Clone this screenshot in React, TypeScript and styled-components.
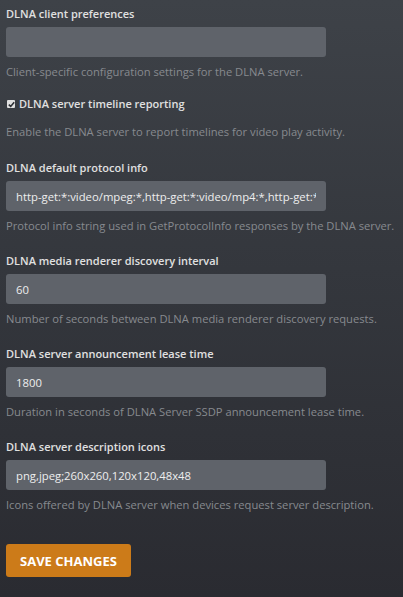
import * as React from 'react';
import styled, { createGlobalStyle } from 'styled-components';

interface Setting {
  label: string;
  value?: string;
  help: string;
  checkbox?: boolean;
  checked?: boolean;
}

const settings: Setting[] = [
  { label: 'DLNA client preferences', value: '', help: 'Client-specific configuration settings for the DLNA server.' },
  { label: 'DLNA server timeline reporting', checkbox: true, checked: true, help: 'Enable the DLNA server to report timelines for video play activity.' },
  { label: 'DLNA default protocol info', value: 'http-get:*:video/mpeg:*,http-get:*:video/mp4:*,http-get:*:video/vnd.dlna.mpeg-tts:*', help: 'Protocol info string used in GetProtocolInfo responses by the DLNA server.' },
  { label: 'DLNA media renderer discovery interval', value: '60', help: 'Number of seconds between DLNA media renderer discovery requests.' },
  { label: 'DLNA server announcement lease time', value: '1800', help: 'Duration in seconds of DLNA Server SSDP announcement lease time.' },
  { label: 'DLNA server description icons', value: 'png,jpeg;260x260,120x120,48x48', help: 'Icons offered by DLNA server when devices request server description.' },
];

const App: React.FC = () => {
  const [values, setValues] = React.useState<Setting[]>(settings);

  const update = (index: number, patch: Partial<Setting>) => {
    setValues(values.map((s, i) => (i === index ? { ...s, ...patch } : s)));
  };

  return (
    <>
      <GlobalStyle />
      <Page>
        {values.map((setting, index) =>
          setting.checkbox ? (
            <CheckGroup key={setting.label}>
              <CheckLabel>
                <Box checked={!!setting.checked} onClick={() => update(index, { checked: !setting.checked })}>
                  {setting.checked && (
                    <svg width="7" height="7" viewBox="0 0 7 7">
                      <path d="M0.8 3.6 L2.7 5.4 L6.2 1.2" fill="none" stroke="#2e3136" strokeWidth="1.6" />
                    </svg>
                  )}
                </Box>
                {setting.label}
              </CheckLabel>
              <Help tight>{setting.help}</Help>
            </CheckGroup>
          ) : (
            <Group key={setting.label}>
              <Label>{setting.label}</Label>
              <Input value={setting.value} onChange={e => update(index, { value: e.target.value })} />
              <Help>{setting.help}</Help>
            </Group>
          )
        )}
        <SaveButton>Save Changes</SaveButton>
      </Page>
    </>
  );
};

export default App;

const GlobalStyle = createGlobalStyle`
  html, body {
    margin: 0;
    padding: 0;
    background: #2a2c31;
  }

  body {
    font-family: "Open Sans", "Noto Sans", sans-serif;
  }
`;

const Page = styled.div`
  min-height: 597px;
  box-sizing: border-box;
  padding: 5px 6px 0;
  background: linear-gradient(180deg, #3e4248 0%, #34373d 45%, #2a2b31 100%);
  display: flex;
  flex-direction: column;
  align-items: flex-start;
`;

const Group = styled.div`
  display: flex;
  flex-direction: column;
  margin-bottom: 17px;
`;

const CheckGroup = styled.div`
  display: flex;
  flex-direction: column;
  margin-top: -3px;
  margin-bottom: 18px;
`;

const Label = styled.label`
  font-size: 11px;
  font-weight: 600;
  line-height: 18px;
  color: #e0e0e0;
  margin-bottom: 4px;
`;

const CheckLabel = styled.label`
  display: flex;
  align-items: center;
  gap: 4px;
  font-size: 11px;
  font-weight: 600;
  line-height: 18px;
  color: #e0e0e0;
  padding-left: 1px;
`;

const Box = styled.span<{ checked: boolean }>`
  width: 8px;
  height: 8px;
  border-radius: 1px;
  background: ${props => (props.checked ? '#e0e0e0' : 'transparent')};
  border: ${props => (props.checked ? 'none' : '1px solid #e0e0e0')};
  display: flex;
  align-items: center;
  justify-content: center;
  cursor: pointer;
`;

const Input = styled.input`
  width: 320px;
  height: 30px;
  box-sizing: border-box;
  border: none;
  border-radius: 3px;
  background: #5f636a;
  color: #eeeeee;
  font: inherit;
  font-size: 11.3px;
  font-weight: 500;
  padding: 0 10px;
  outline: none;
`;

const Help = styled.div<{ tight?: boolean }>`
  font-size: 11.2px;
  line-height: 18px;
  color: #878a8f;
  margin-top: ${props => (props.tight ? '10px' : '6px')};
  white-space: nowrap;
`;

const SaveButton = styled.button`
  margin-top: 13px;
  height: 33px;
  padding: 0 14px;
  border: none;
  border-radius: 3px;
  background: #cc7b19;
  color: #ffffff;
  font: inherit;
  font-size: 13px;
  font-weight: 700;
  text-transform: uppercase;
  cursor: pointer;
`;
